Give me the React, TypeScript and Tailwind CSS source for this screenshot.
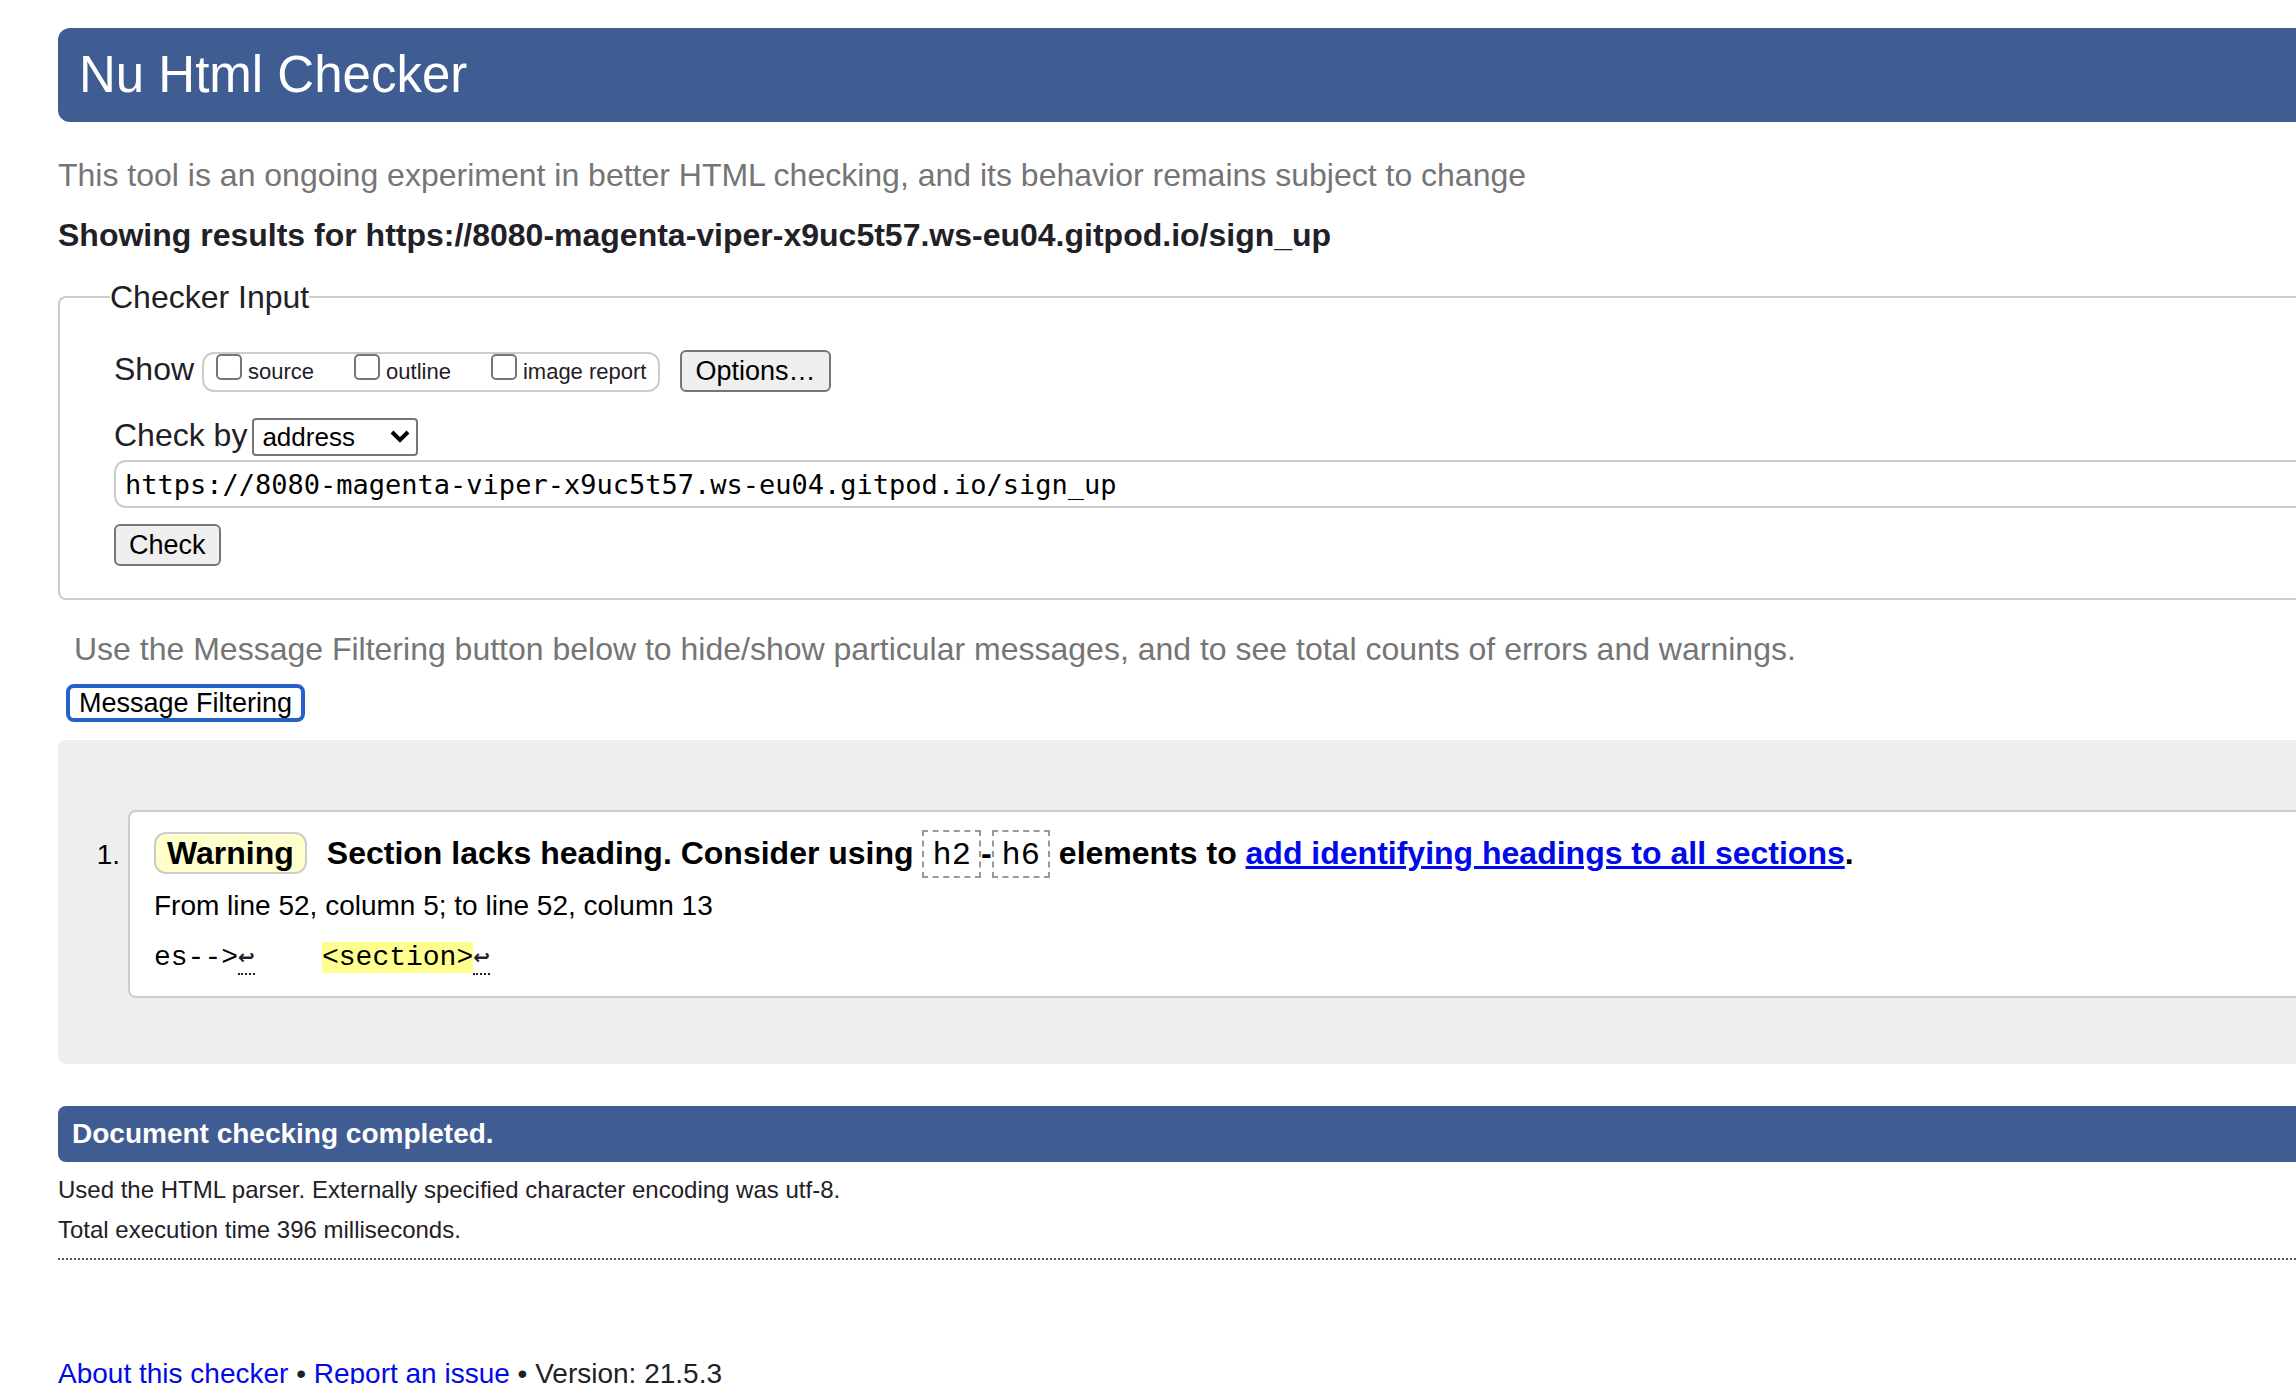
import React from "react";

const address = "https://8080-magenta-viper-x9uc5t57.ws-eu04.gitpod.io/sign_up";

const buttonClass =
  "h-[42px] rounded-md border-2 border-[#767676] bg-[#efefef] px-[13px] text-[27px] leading-[38px] text-black";

function ShowOption({ id, label }: { id: string; label: string }) {
  return (
    <span className="flex items-start gap-[6px]">
      <input
        id={id}
        type="checkbox"
        className="size-[26px] appearance-none rounded-[5px] border-2 border-[#767676] bg-white checked:bg-[#2560cb]"
      />
      <label htmlFor={id} className="text-[22px] leading-9">
        {label}
      </label>
    </span>
  );
}

function Code({ children }: { children: React.ReactNode }) {
  return (
    <code className="border-2 border-dashed border-[#999] px-2 pt-[5px] pb-[2px] font-['Liberation_Mono',monospace] text-[32px] font-normal">
      {children}
    </code>
  );
}

function LineBreakMark() {
  return (
    <span
      title="Line break"
      className="inline-block h-[34px] border-b-2 border-dotted border-[#1f2126] align-middle font-['DejaVu_Sans',sans-serif] text-xl leading-8 font-bold text-[#1f2126]"
    >
      ↩
    </span>
  );
}

export default function App() {
  return (
    <div className="h-screen overflow-hidden bg-white pt-7 pl-[58px] font-['Liberation_Sans',Arial,sans-serif] text-[32px] text-[#1f2126]">
      <header>
        <h1 className="rounded-l-xl bg-[#3f5d92] px-[21px] text-[51px] leading-[94px] text-white">
          Nu Html Checker
        </h1>
        <p className="mt-8 leading-[42px] text-[#757575]">
          This tool is an ongoing experiment in better HTML checking, and its behavior remains subject to change
        </p>
      </header>

      <main>
        <h2 className="mt-[18px] leading-[42px] font-bold">Showing results for {address}</h2>

        <form onSubmit={(e) => e.preventDefault()}>
          <fieldset className="mt-[21px] rounded-l-lg border-2 border-r-0 border-[#ccc] pb-8 pl-[54px]">
            <legend className="-ml-1 leading-10">Checker Input</legend>

            <div className="mt-[33px] flex items-baseline">
              <span className="leading-[38px]">Show</span>
              <div className="ml-2 flex h-10 gap-10 rounded-xl border-2 border-[#ccc] px-3">
                <ShowOption id="show-source" label="source" />
                <ShowOption id="show-outline" label="outline" />
                <ShowOption id="show-image-report" label="image report" />
              </div>
              <button type="button" className={`ml-5 ${buttonClass}`}>
                Options…
              </button>
            </div>

            <div className="mt-[26px] flex items-start">
              <label htmlFor="check-by" className="leading-[34px]">
                Check by
              </label>
              <div className="relative ml-[5px]">
                <select
                  id="check-by"
                  className="block h-[38px] w-[166px] appearance-none rounded-sm border-2 border-[#767676] bg-white pl-2 text-[26px] leading-[34px] text-black"
                >
                  <option>address</option>
                  <option>file upload</option>
                  <option>text input</option>
                </select>
                <svg
                  aria-hidden="true"
                  viewBox="0 0 20 14"
                  className="pointer-events-none absolute top-3 right-2 h-[14px] w-5 fill-none stroke-black"
                >
                  <path d="M2 2 L10 10 L18 2" strokeWidth="4" />
                </svg>
              </div>
            </div>

            <input
              type="text"
              aria-label="Address"
              defaultValue={address}
              className="mt-1 block h-12 w-full rounded-l-xl border-2 border-r-0 border-[#ccc] bg-white px-[9px] font-['DejaVu_Sans_Mono',monospace] text-[27px] leading-[44px] text-black"
            />
            <button type="submit" className={`mt-4 block ${buttonClass}`}>
              Check
            </button>
          </fieldset>
        </form>

        <p className="mt-[29px] pl-4 leading-10 text-[#757575]">
          Use the Message Filtering button below to hide/show particular messages, and to see total counts of errors
          and warnings.
        </p>
        <button
          type="button"
          className="mt-[15px] ml-2 block h-[38px] rounded-lg border-4 border-[#2560cb] bg-white px-[9px] text-[27px] leading-[30px] text-black"
        >
          Message Filtering
        </button>

        <ol className="mt-[18px] rounded-l-lg bg-[#eee] pt-[70px] pb-[66px] text-black">
          <li className="flex">
            <span className="w-[70px] pt-[25px] pr-2 text-right text-[28px] leading-10">1.</span>
            <div className="flex-1 rounded-l-lg border-2 border-r-0 border-[#ccc] bg-white pt-[17px] pb-[18px] pl-6">
              <p className="leading-[48px] font-bold">
                <strong className="mr-5 inline-block h-[42px] rounded-xl border-2 border-[#ccc] bg-[#ffffcc] px-[11px] align-baseline leading-[38px]">
                  Warning
                </strong>
                Section lacks heading. Consider using <Code>h2</Code>-<Code>h6</Code> elements to{" "}
                <a href="#headings" className="text-[#0009e8] underline">
                  add identifying headings to all sections
                </a>
                .
              </p>
              <p className="mt-[6px] text-[28px] leading-10">From line 52, column 5; to line 52, column 13</p>
              <p className="mt-3 h-10 font-['Liberation_Mono',monospace] text-[28px] leading-10 whitespace-pre">
                {"es-->"}
                <LineBreakMark />
                {"    "}
                <mark className="bg-[#ffff90] text-black">{"<section>"}</mark>
                <LineBreakMark />
              </p>
            </div>
          </li>
        </ol>

        <p className="mt-[42px] rounded-l-lg bg-[#3f5d92] px-[14px] text-[28px] leading-[56px] font-bold text-white">
          Document checking completed.
        </p>
        <p className="mt-2 text-2xl leading-10">
          Used the HTML parser. Externally specified character encoding was utf-8.
        </p>
        <p className="text-2xl leading-10">Total execution time 396 milliseconds.</p>
      </main>

      <footer className="mt-2 border-t-2 border-dotted border-[#555] pt-[94px] text-[28px] leading-10">
        <a href="#about" className="text-[#0009e8] underline">
          About this checker
        </a>{" "}
        •{" "}
        <a href="#issue" className="text-[#0009e8] underline">
          Report an issue
        </a>{" "}
        • Version: 21.5.3
      </footer>
    </div>
  );
}
